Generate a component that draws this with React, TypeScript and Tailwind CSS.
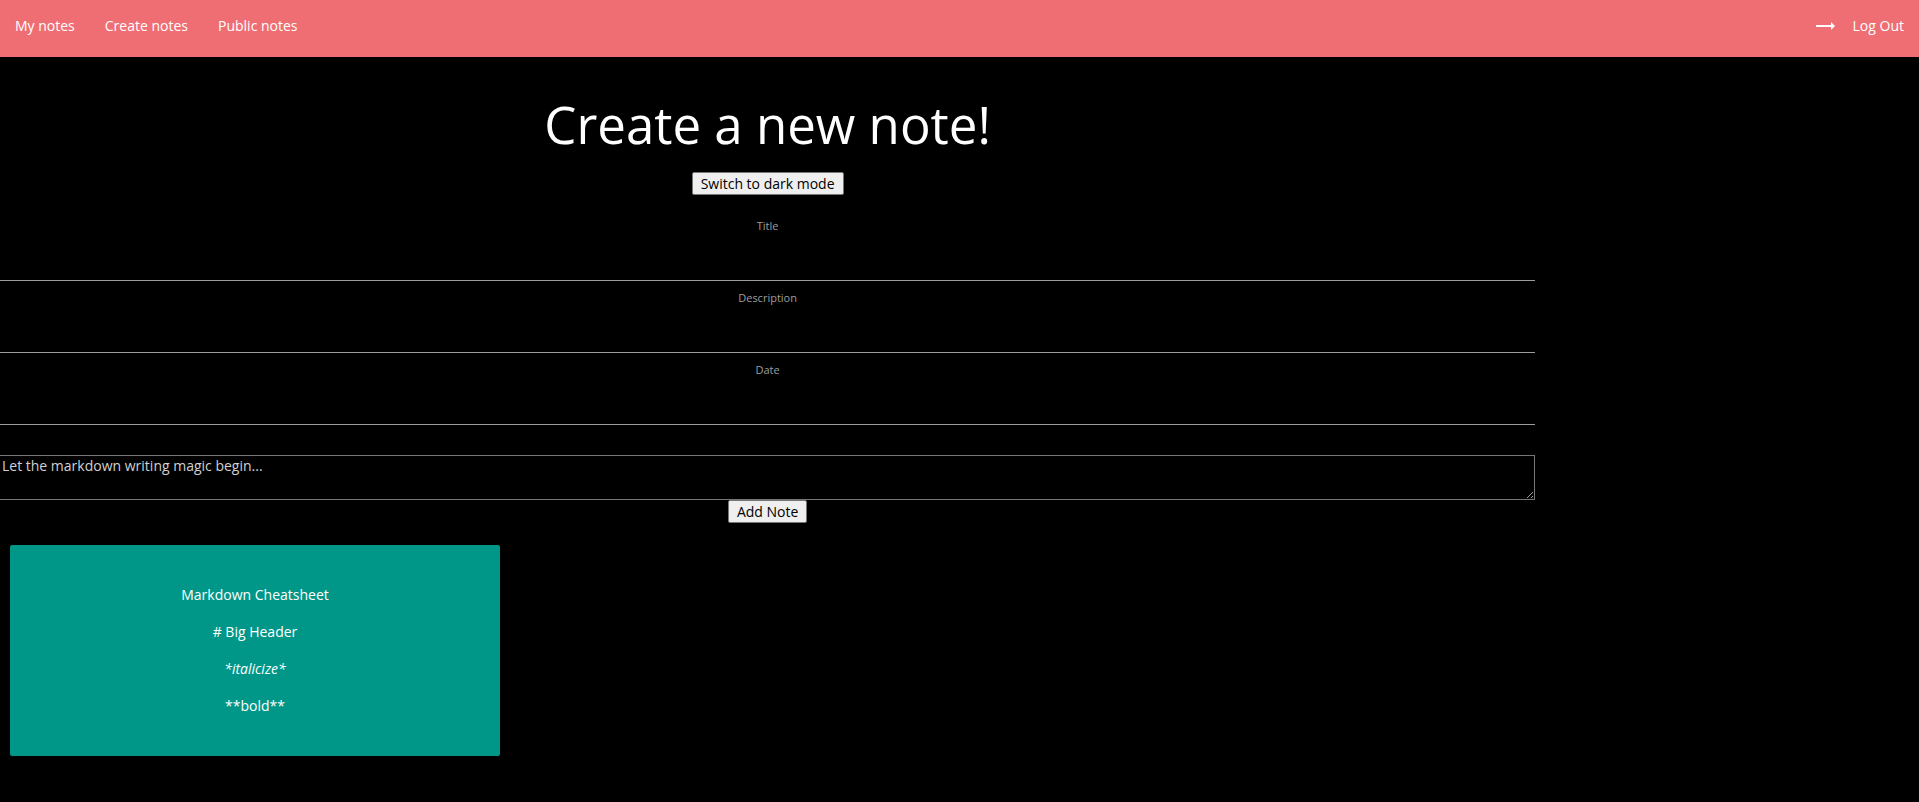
import { MdTrendingFlat } from "react-icons/md";

const links = ["My notes", "Create notes", "Public notes"];
const fields = ["Title", "Description", "Date"];

const buttonClass =
  "flex h-[23px] items-center rounded-[2px] border border-[#767676] bg-[#efefef] px-2 text-[14px] leading-5 text-black";

function Navbar() {
  return (
    <nav className="flex h-[57px] items-start justify-between bg-[#ee6e73] text-[14px] leading-[52px] text-white">
      <ul className="flex">
        {links.map((label) => (
          <li key={label}>
            <a href="#" className="block px-[15px]">
              {label}
            </a>
          </li>
        ))}
      </ul>
      <a href="#" className="flex items-center gap-4 px-[15px]">
        <MdTrendingFlat className="size-6" aria-hidden="true" />
        Log Out
      </a>
    </nav>
  );
}

function Field({ label }: { label: string }) {
  const id = label.toLowerCase();
  return (
    <div className="mb-2 flex flex-col">
      <label htmlFor={id} className="text-center text-[11px] leading-[18px] text-[#9e9e9e]">
        {label}
      </label>
      <input
        id={id}
        type="text"
        className="h-[46px] w-full border-b border-[#9e9e9e] bg-transparent text-center text-base outline-none"
      />
    </div>
  );
}

function Cheatsheet() {
  return (
    <section className="mx-[10px] mt-[22px] flex w-[490px] max-w-full flex-col gap-[15px] rounded-[2px] bg-[#009688] px-6 py-[39px] text-center text-[14px] leading-[22px]">
      <p>Markdown Cheatsheet</p>
      <p># Big Header</p>
      <p className="italic">*italicize*</p>
      <p>**bold**</p>
    </section>
  );
}

export default function App() {
  return (
    <div className="min-h-screen bg-black font-['Open_Sans','Noto_Sans',sans-serif] text-white">
      <Navbar />
      <main className="pt-[33px] pb-8">
        <form className="flex w-4/5 flex-col items-center" onSubmit={(e) => e.preventDefault()}>
          <h1 className="text-[51px] leading-[68px]">Create a new note!</h1>
          <button type="button" className={`mt-[14px] ${buttonClass}`}>
            Switch to dark mode
          </button>
          <div className="mt-[22px] w-full">
            {fields.map((label) => (
              <Field key={label} label={label} />
            ))}
          </div>
          <textarea
            aria-label="Note"
            placeholder="Let the markdown writing magic begin..."
            className="mt-[22px] block h-[45px] w-full resize border border-l-0 border-[#767676] bg-transparent px-[2px] text-[14px] leading-5 outline-none placeholder:text-[#d1d1d1]"
          />
          <button type="submit" className={buttonClass}>
            Add Note
          </button>
        </form>
        <Cheatsheet />
      </main>
    </div>
  );
}
